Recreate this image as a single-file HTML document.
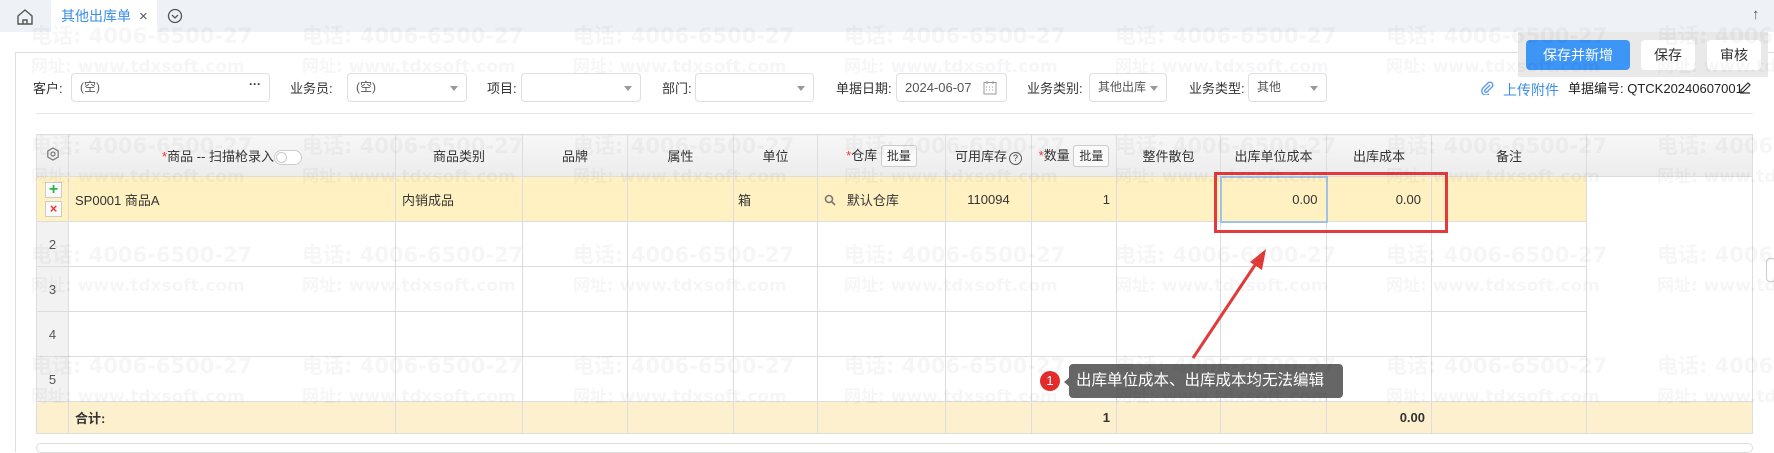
<!DOCTYPE html>
<html><head><meta charset="utf-8"><style>
*{box-sizing:border-box;margin:0;padding:0}
body{width:1774px;height:446px;overflow:hidden;background:#fff;font-family:"Liberation Sans","Noto Sans CJK SC",sans-serif;font-size:13px;color:#333;position:relative}
.a{position:absolute}
.top{left:0;top:0;width:1774px;height:32px;background:#eef1f5}
.tab{left:51px;top:0;width:106px;height:32px;background:#fff;color:#3a8ee6;font-size:14px;line-height:32px;padding-left:10px}
.panel{left:15px;top:52px;width:1760px;height:400px;border:1px solid #ddd;border-right:none;border-bottom:none}
.lbl{font-size:13px;line-height:16px;color:#333}
.inp{height:29px;border:1px solid #dcdfe6;border-radius:4px;background:#fff;font-size:12px;line-height:27px;padding-left:8px;color:#555}
.caret{position:absolute;right:8px;top:12px;width:0;height:0;border-left:4px solid transparent;border-right:4px solid transparent;border-top:5px solid #999}
table{position:absolute;left:36px;top:134px;border-collapse:collapse;table-layout:fixed}
td,th{border:1px solid #ddd;font-size:13px;font-weight:normal;padding:0 6px;white-space:nowrap;overflow:hidden}
th{height:42px;background:linear-gradient(#f7f7f7,#ececec);text-align:center;color:#333}
tr.r td{height:45px}
tr.y td{background:#fff1c2}
tr.t td{height:32px;background:#fdf0cf;font-weight:bold}
td.n{background:#f2f2f2;text-align:center;color:#555;padding:0}
.req{color:#e33}
.bb{display:inline-block;border:1px solid #ccc;border-radius:3px;padding:0 5px;line-height:20px;background:#fafafa;font-size:12px}
.wm{position:absolute;color:rgba(0,0,0,0.035);font-weight:bold;pointer-events:none;white-space:nowrap;font-family:"DejaVu Sans","Noto Sans CJK SC",sans-serif}
.btn{position:absolute;top:40px;height:30px;border-radius:4px;font-size:14px;line-height:30px;text-align:center;background:#fff;color:#333}
</style></head><body>
<div class="a top"></div>
<svg class="a" style="left:16px;top:8px" width="18" height="18" viewBox="0 0 18 18" fill="none" stroke="#555" stroke-width="1.4"><path d="M2 8L9 2l7 6v8H2z"/><path d="M7 16v-4h4v4"/></svg>
<div class="a tab">其他出库单<span style="color:#555;margin-left:8px;font-size:15px">×</span></div>
<svg class="a" style="left:167px;top:8px" width="16" height="16" viewBox="0 0 16 16" fill="none" stroke="#555" stroke-width="1.3"><circle cx="8" cy="8" r="6.5"/><path d="M5 7l3 3 3-3"/></svg>
<div class="a" style="left:1752px;top:6px;font-size:15px;color:#555">↑</div>

<div class="a panel"></div>
<div class="a" style="left:1518px;top:32px;width:250px;height:45px;background:#e9e9e9"></div>
<div class="btn" style="left:1526px;width:104px;background:#3d95f5;color:#fff">保存并新增</div>
<div class="btn" style="left:1641px;width:54px">保存</div>
<div class="btn" style="left:1707px;width:54px">审核</div>

<div class="a lbl" style="left:33px;top:81px">客户:</div>
<div class="a inp" style="left:71px;top:73px;width:199px">(空)<span style="position:absolute;right:8px;top:-3px;font-weight:bold;color:#333">···</span></div>
<div class="a lbl" style="left:290px;top:81px">业务员:</div>
<div class="a inp" style="left:347px;top:73px;width:120px">(空)<i class="caret"></i></div>
<div class="a lbl" style="left:487px;top:81px">项目:</div>
<div class="a inp" style="left:521px;top:73px;width:120px"><i class="caret"></i></div>
<div class="a lbl" style="left:662px;top:81px">部门:</div>
<div class="a inp" style="left:695px;top:73px;width:119px"><i class="caret"></i></div>
<div class="a lbl" style="left:836px;top:81px">单据日期:</div>
<div class="a inp" style="left:896px;top:73px;width:111px;font-size:13px">2024-06-07<svg style="position:absolute;right:9px;top:6px" width="14" height="15" viewBox="0 0 14 15" fill="none" stroke="#999"><rect x="1" y="2.5" width="12" height="11.5"/><path d="M4 1v3M10 1v3M3 7h1M6 7h1M9 7h1M3 10h1M6 10h1M9 10h1"/></svg></div>
<div class="a lbl" style="left:1027px;top:81px">业务类别:</div>
<div class="a inp" style="left:1089px;top:73px;width:78px">其他出库<i class="caret"></i></div>
<div class="a lbl" style="left:1189px;top:81px">业务类型:</div>
<div class="a inp" style="left:1248px;top:73px;width:79px">其他<i class="caret"></i></div>
<svg class="a" style="left:1480px;top:81px" width="14" height="14" viewBox="0 0 14 14" fill="none" stroke="#5a9de8" stroke-width="1.4"><path d="M10 4L5 9a1.4 1.4 0 0 0 2 2l5-5a2.8 2.8 0 0 0-4-4L3 7a4 4 0 0 0 6 6"/></svg>
<div class="a" style="left:1503px;top:80px;font-size:14px;color:#3d8ee8">上传附件</div>
<div class="a lbl" style="left:1568px;top:81px;color:#222">单据编号: QTCK20240607001</div>
<svg class="a" style="left:1738px;top:80px" width="14" height="14" viewBox="0 0 14 14" fill="none" stroke="#333" stroke-width="1.2"><path d="M3 10l7-7 2 2-7 7H3zM2 13h10"/></svg>
<div class="a" style="left:36px;top:113px;width:1717px;height:1px;background:#e6e6e6"></div>

<table>
<colgroup><col style="width:32px"><col style="width:327px"><col style="width:127px"><col style="width:105px"><col style="width:106px"><col style="width:84px"><col style="width:128px"><col style="width:86px"><col style="width:85px"><col style="width:104px"><col style="width:106px"><col style="width:105px"><col style="width:155px"><col style="width:166px"></colgroup>
<tr><th style="padding:0"><svg width="14" height="14" viewBox="0 0 14 14" fill="none" stroke="#777" stroke-width="1.2"><path d="M7 1l5.2 3v6L7 13 1.8 10V4z"/><circle cx="7" cy="7" r="2"/></svg></th>
<th><span class="req">*</span>商品 -- 扫描枪录入<span style="display:inline-block;width:28px;height:15px;border:1px solid #ccc;border-radius:8px;vertical-align:middle;background:#fff;position:relative"><i style="position:absolute;left:1px;top:1px;width:11px;height:11px;border-radius:50%;border:1px solid #ccc"></i></span></th>
<th>商品类别</th><th>品牌</th><th>属性</th><th>单位</th><th><span class="req">*</span>仓库 <span class="bb">批量</span></th><th>可用库存<span style="display:inline-block;width:13px;height:13px;border:1px solid #555;border-radius:50%;font-size:9px;line-height:11px;margin-left:2px">?</span></th><th style="padding:0"><span class="req">*</span>数量 <span class="bb">批量</span></th><th>整件散包</th><th>出库单位成本</th><th>出库成本</th><th>备注</th><th style="border-right:1px solid #ddd"></th></tr>
<tr class="r y"><td class="n" style="position:relative"><span style="position:absolute;left:8px;top:5px;width:17px;height:16px;border:1px solid #ccc;background:#fafafa;color:#2db34a;font-weight:bold;font-size:16px;line-height:13px">+</span><span style="position:absolute;left:8px;top:24px;width:17px;height:16px;border:1px solid #ccc;background:#fafafa;color:#e33;font-weight:bold;font-size:13px;line-height:14px">×</span></td>
<td>SP0001 商品A</td><td>内销成品</td><td></td><td></td><td style="padding-left:4px">箱</td><td><svg width="12" height="12" viewBox="0 0 12 12" fill="none" stroke="#777" stroke-width="1.6" style="vertical-align:-1px"><circle cx="5" cy="5" r="3.5"/><path d="M7.5 7.5L11 11"/></svg>&nbsp;&nbsp; 默认仓库</td><td style="text-align:center">110094</td><td style="text-align:right">1</td><td></td><td style="text-align:right;border:2px solid #9fc3e8;padding-right:8px">0.00</td><td style="text-align:right;padding-right:10px">0.00</td><td></td><td rowspan="5" style="background:#fff;border-bottom:none"></td></tr>
<tr class="r"><td class="n">2</td><td></td><td></td><td></td><td></td><td></td><td></td><td></td><td></td><td></td><td></td><td></td><td></td></tr>
<tr class="r"><td class="n">3</td><td></td><td></td><td></td><td></td><td></td><td></td><td></td><td></td><td></td><td></td><td></td><td></td></tr>
<tr class="r"><td class="n">4</td><td></td><td></td><td></td><td></td><td></td><td></td><td></td><td></td><td></td><td></td><td></td><td></td></tr>
<tr class="r"><td class="n" style="height:44px">5</td><td></td><td></td><td></td><td></td><td></td><td></td><td></td><td></td><td></td><td></td><td></td><td></td></tr>
<tr class="t"><td class="n" style="background:#fdf0cf"></td><td>合计:</td><td></td><td></td><td></td><td></td><td></td><td></td><td style="text-align:right">1</td><td></td><td></td><td style="text-align:right">0.00</td><td></td><td></td></tr>
</table>
<div class="a" style="left:36px;top:443px;width:1717px;height:10px;border:1px solid #ddd;border-radius:5px"></div>

<div class="a" style="left:1214px;top:172px;width:234px;height:61px;border:3px solid #e23b3b"></div>
<svg class="a" style="left:1180px;top:240px" width="100" height="125" viewBox="1180 240 100 125"><path d="M1193 358L1257 262" stroke="#e23b3b" stroke-width="3"/><path d="M1266 249L1250 262L1262 270Z" fill="#e23b3b"/></svg>
<div class="a" style="left:1040px;top:371px;width:20px;height:20px;border-radius:50%;background:#e32b2b;color:#fff;text-align:center;line-height:20px;font-size:13px">1</div>
<div class="a" style="left:1064px;top:377px;width:0;height:0;border-top:5px solid transparent;border-bottom:5px solid transparent;border-right:6px solid #666"></div>
<div class="a" style="left:1069px;top:364px;width:274px;height:34px;background:#666;border-radius:4px;color:#fff;font-size:15.5px;line-height:34px;padding-left:7px">出库单位成本、出库成本均无法编辑</div>
<div class="a" style="left:1766px;top:258px;width:10px;height:24px;border:1px solid #ccc;border-radius:4px;background:#fff"></div>

<div class="wm" style="left:31px;top:20px;font-size:21px">电话: 4006-6500-27</div><div class="wm" style="left:31px;top:52px;font-size:17px">网址: www.tdxsoft.com</div>
<div class="wm" style="left:302px;top:20px;font-size:21px">电话: 4006-6500-27</div><div class="wm" style="left:302px;top:52px;font-size:17px">网址: www.tdxsoft.com</div>
<div class="wm" style="left:573px;top:20px;font-size:21px">电话: 4006-6500-27</div><div class="wm" style="left:573px;top:52px;font-size:17px">网址: www.tdxsoft.com</div>
<div class="wm" style="left:844px;top:20px;font-size:21px">电话: 4006-6500-27</div><div class="wm" style="left:844px;top:52px;font-size:17px">网址: www.tdxsoft.com</div>
<div class="wm" style="left:1115px;top:20px;font-size:21px">电话: 4006-6500-27</div><div class="wm" style="left:1115px;top:52px;font-size:17px">网址: www.tdxsoft.com</div>
<div class="wm" style="left:1386px;top:20px;font-size:21px">电话: 4006-6500-27</div><div class="wm" style="left:1386px;top:52px;font-size:17px">网址: www.tdxsoft.com</div>
<div class="wm" style="left:1657px;top:20px;font-size:21px">电话: 4006-6500-27</div><div class="wm" style="left:1657px;top:52px;font-size:17px">网址: www.tdxsoft.com</div>
<div class="wm" style="left:31px;top:130px;font-size:21px">电话: 4006-6500-27</div><div class="wm" style="left:31px;top:162px;font-size:17px">网址: www.tdxsoft.com</div>
<div class="wm" style="left:302px;top:130px;font-size:21px">电话: 4006-6500-27</div><div class="wm" style="left:302px;top:162px;font-size:17px">网址: www.tdxsoft.com</div>
<div class="wm" style="left:573px;top:130px;font-size:21px">电话: 4006-6500-27</div><div class="wm" style="left:573px;top:162px;font-size:17px">网址: www.tdxsoft.com</div>
<div class="wm" style="left:844px;top:130px;font-size:21px">电话: 4006-6500-27</div><div class="wm" style="left:844px;top:162px;font-size:17px">网址: www.tdxsoft.com</div>
<div class="wm" style="left:1115px;top:130px;font-size:21px">电话: 4006-6500-27</div><div class="wm" style="left:1115px;top:162px;font-size:17px">网址: www.tdxsoft.com</div>
<div class="wm" style="left:1386px;top:130px;font-size:21px">电话: 4006-6500-27</div><div class="wm" style="left:1386px;top:162px;font-size:17px">网址: www.tdxsoft.com</div>
<div class="wm" style="left:1657px;top:130px;font-size:21px">电话: 4006-6500-27</div><div class="wm" style="left:1657px;top:162px;font-size:17px">网址: www.tdxsoft.com</div>
<div class="wm" style="left:31px;top:239px;font-size:21px">电话: 4006-6500-27</div><div class="wm" style="left:31px;top:271px;font-size:17px">网址: www.tdxsoft.com</div>
<div class="wm" style="left:302px;top:239px;font-size:21px">电话: 4006-6500-27</div><div class="wm" style="left:302px;top:271px;font-size:17px">网址: www.tdxsoft.com</div>
<div class="wm" style="left:573px;top:239px;font-size:21px">电话: 4006-6500-27</div><div class="wm" style="left:573px;top:271px;font-size:17px">网址: www.tdxsoft.com</div>
<div class="wm" style="left:844px;top:239px;font-size:21px">电话: 4006-6500-27</div><div class="wm" style="left:844px;top:271px;font-size:17px">网址: www.tdxsoft.com</div>
<div class="wm" style="left:1115px;top:239px;font-size:21px">电话: 4006-6500-27</div><div class="wm" style="left:1115px;top:271px;font-size:17px">网址: www.tdxsoft.com</div>
<div class="wm" style="left:1386px;top:239px;font-size:21px">电话: 4006-6500-27</div><div class="wm" style="left:1386px;top:271px;font-size:17px">网址: www.tdxsoft.com</div>
<div class="wm" style="left:1657px;top:239px;font-size:21px">电话: 4006-6500-27</div><div class="wm" style="left:1657px;top:271px;font-size:17px">网址: www.tdxsoft.com</div>
<div class="wm" style="left:31px;top:350px;font-size:21px">电话: 4006-6500-27</div><div class="wm" style="left:31px;top:382px;font-size:17px">网址: www.tdxsoft.com</div>
<div class="wm" style="left:302px;top:350px;font-size:21px">电话: 4006-6500-27</div><div class="wm" style="left:302px;top:382px;font-size:17px">网址: www.tdxsoft.com</div>
<div class="wm" style="left:573px;top:350px;font-size:21px">电话: 4006-6500-27</div><div class="wm" style="left:573px;top:382px;font-size:17px">网址: www.tdxsoft.com</div>
<div class="wm" style="left:844px;top:350px;font-size:21px">电话: 4006-6500-27</div><div class="wm" style="left:844px;top:382px;font-size:17px">网址: www.tdxsoft.com</div>
<div class="wm" style="left:1115px;top:350px;font-size:21px">电话: 4006-6500-27</div><div class="wm" style="left:1115px;top:382px;font-size:17px">网址: www.tdxsoft.com</div>
<div class="wm" style="left:1386px;top:350px;font-size:21px">电话: 4006-6500-27</div><div class="wm" style="left:1386px;top:382px;font-size:17px">网址: www.tdxsoft.com</div>
<div class="wm" style="left:1657px;top:350px;font-size:21px">电话: 4006-6500-27</div><div class="wm" style="left:1657px;top:382px;font-size:17px">网址: www.tdxsoft.com</div>
</body></html>
